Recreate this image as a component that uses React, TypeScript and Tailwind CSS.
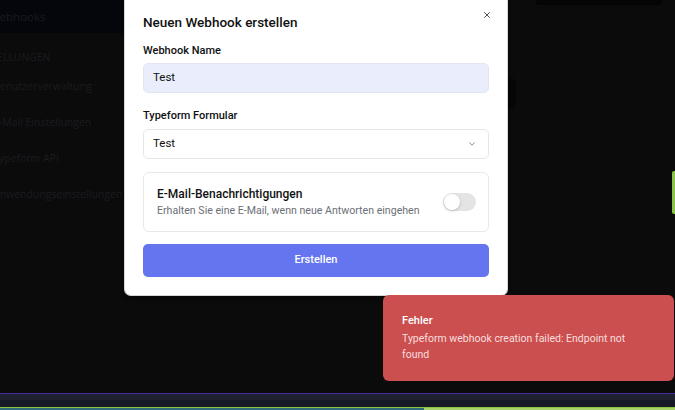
import React from "react";

function Chevron() {
  return (
    <svg width="10" height="10" viewBox="0 0 24 24" fill="none" stroke="#6b7280" strokeWidth="2" strokeLinecap="round" strokeLinejoin="round">
      <path d="m6 9 6 6 6-6" />
    </svg>
  );
}

function XIcon() {
  return (
    <svg width="10" height="10" viewBox="0 0 24 24" fill="none" stroke="#4b5563" strokeWidth="2.4" strokeLinecap="round" strokeLinejoin="round">
      <path d="M18 6 6 18" />
      <path d="m6 6 12 12" />
    </svg>
  );
}

export default function App() {
  const items = ["Benutzerverwaltung", "E-Mail Einstellungen", "Typeform API", "Anwendungseinstellungen"];
  return (
    <div className="relative w-[675px] h-[410px] overflow-hidden bg-[#0b0b0b]" style={{ fontFamily: "Roboto, 'Noto Sans', sans-serif" }}>
      <div className="flex flex-col h-full">
        <div className="flex flex-1 min-h-0">
          {/* sidebar */}
          <div className="w-[200px] flex flex-col" style={{ fontFamily: "'Open Sans', sans-serif" }}>
            <div className="h-[33px] bg-[#05060b] flex items-center">
              <span className="ml-[-11px] text-[11.5px] text-[#181a22]">Webhooks</span>
            </div>
            <div className="flex flex-col pt-[16px]">
              <span className="ml-[-31px] text-[10px] tracking-wide text-[#1a1b20] leading-[17px]">EINSTELLUNGEN</span>
              <div className="flex flex-col gap-[20px] mt-[12px]">
                {items.map((t) => (
                  <span key={t} className="ml-[-7px] text-[10.5px] leading-[16px] text-[#1a1b20]">{t}</span>
                ))}
              </div>
            </div>
          </div>
          <div className="flex-1 relative">
            <div className="absolute left-[336px] top-0 w-[126px] h-[5px] rounded-b-[4px] bg-[#050505]" />
            <div className="absolute left-[308px] top-[79px] w-[8px] h-[29px] rounded-r-[4px] bg-[#060609]" />
            <div className="absolute right-0 top-[171px] w-[3px] h-[43px] rounded-l-[2px] bg-[#8bc34a]" />
          </div>
        </div>
        {/* bottom bar */}
        <div className="h-[17px] flex flex-col">
          <div className="h-[1px] bg-[#4a2ea0]" />
          <div className="h-[6px] bg-[#1f2130]" />
          <div className="h-[7px] bg-[#171926]" />
          <div className="h-[1px] bg-[#8cc63f]" />
          <div className="flex-1 flex">
            <div className="w-[424px] bg-[#2f6a7a]" />
            <div className="flex-1 bg-[#a5d36a]" />
          </div>
        </div>
      </div>

      {/* modal */}
      <div className="absolute left-[124px] top-0 w-[384px] bg-white rounded-b-[7px] border border-t-0 border-[#d6d6d6] shadow-md px-[18px] pb-[18px] pt-[12px]">
        <button className="absolute right-[14px] top-[9px] p-[1px]">
          <XIcon />
        </button>
        <h2 className="text-[13.5px] leading-[20px] font-medium text-[#111111]">Neuen Webhook erstellen</h2>
        <div className="mt-[11px] text-[11px] leading-[16px] font-medium text-[#111111]">Webhook Name</div>
        <div className="mt-[4px] h-[30px] rounded-[5px] border border-[#e3e6f0] bg-[#e9edfc] flex items-center px-[9px] text-[11.5px] text-[#111111]">Test</div>
        <div className="mt-[15px] text-[11px] leading-[16px] font-medium text-[#111111]">Typeform Formular</div>
        <div className="mt-[5px] h-[30px] rounded-[5px] border border-[#e5e7eb] bg-white flex items-center justify-between px-[9px] pr-[11px] text-[11.5px] text-[#111111]">
          <span>Test</span>
          <Chevron />
        </div>
        <div className="mt-[13px] h-[60px] rounded-[6px] border border-[#e8e8e8] flex items-center justify-between pl-[13px] pr-[12px]">
          <div className="flex flex-col">
            <span className="text-[12px] leading-[17px] font-medium text-[#111111]">E-Mail-Benachrichtigungen</span>
            <span className="text-[10.6px] leading-[16px] text-[#6b6f76] whitespace-nowrap">Erhalten Sie eine E-Mail, wenn neue Antworten eingehen</span>
          </div>
          <div className="w-[33px] h-[18px] rounded-full bg-[#e4e4e4] flex items-center px-[1px]">
            <div className="w-[16px] h-[16px] rounded-full bg-white shadow-[0_1px_3px_rgba(0,0,0,0.2)]" />
          </div>
        </div>
        <button className="mt-[12px] w-full h-[33px] rounded-[5px] bg-[#6475ef] text-white text-[11px] font-medium">Erstellen</button>
      </div>

      {/* toast */}
      <div className="absolute left-[383px] top-[295px] w-[291px] h-[86px] rounded-[6px] bg-[#cc4f4f] pl-[19px] pr-[40px] pt-[18px]">
        <div className="text-[11px] leading-[16px] font-medium text-white">Fehler</div>
        <div className="mt-[2px] text-[10.5px] leading-[16px] text-[#f7dede]">Typeform webhook creation failed: Endpoint not found</div>
      </div>
    </div>
  );
}
